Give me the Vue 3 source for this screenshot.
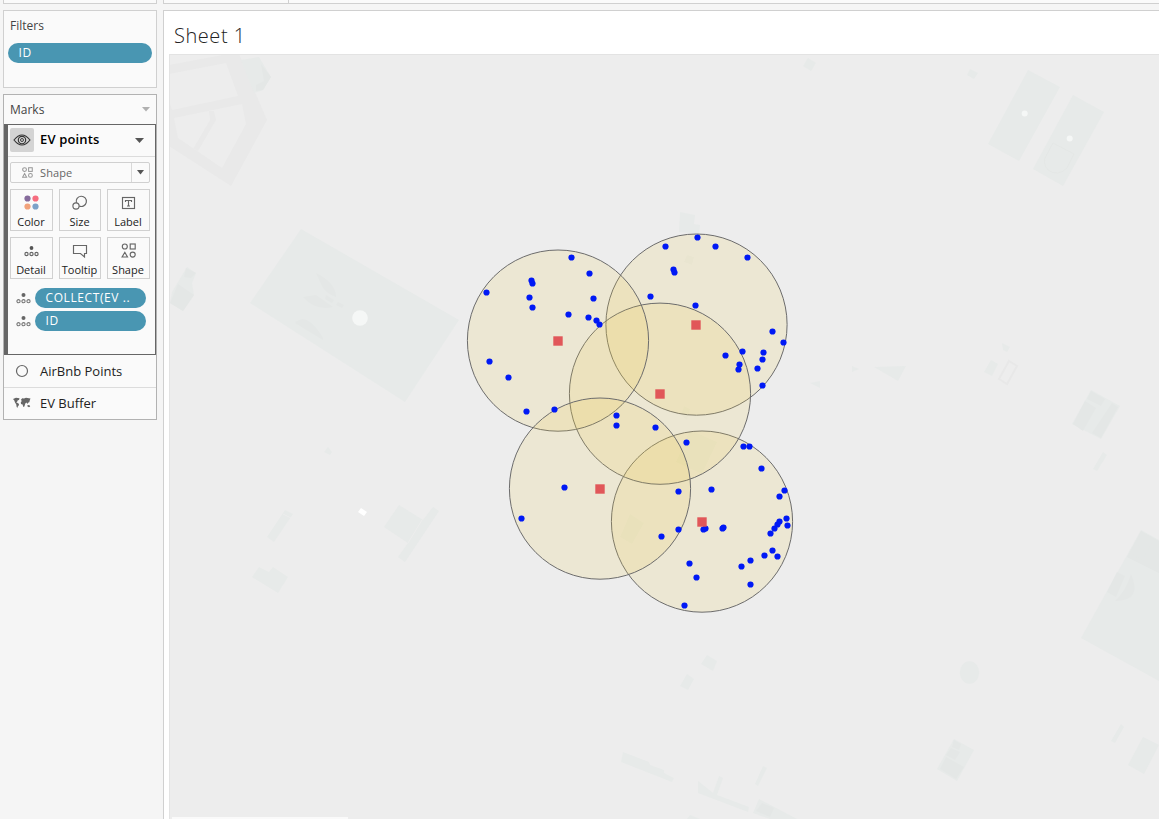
<script setup>
const buffers = [
  [702, 521.6], [696.5, 324.6], [660, 393.7], [558, 340.6], [600, 488.6],
]
const centers = [[558, 341], [696, 325], [660, 394], [600, 489], [702, 522]]
const points = [
  [571.5, 257.5], [589.5, 273.5], [531.5, 280.5], [532.5, 283.5], [486.5, 292.5], [529.5, 297.5], [593.5, 298.5],
  [532.5, 307.5], [568.5, 314.5], [588.5, 317.5], [596.5, 320.5], [599.5, 324.5], [489.5, 361.5], [508.5, 377.5],
  [526.5, 411.5], [554.5, 409.5], [616.5, 415.5], [616.5, 425.5], [655.5, 427.5], [697.5, 237.5], [665.5, 246.5],
  [715.5, 246.5], [747.5, 257.5], [673.5, 269.5], [674.5, 272.5], [650.5, 296.5], [695.5, 305.5], [772.5, 331.5],
  [783.5, 342.5], [742.5, 351.5], [725.5, 355.5], [763.5, 352.5], [762.5, 359.5], [757.5, 368.5], [739.5, 364.5],
  [738.5, 369.5], [762.5, 385.5], [564.5, 487.5], [521.5, 518.5], [686.5, 442.5], [743.5, 446.5], [749.5, 446.5],
  [761.5, 468.5], [784.5, 490.5], [779.5, 496.5], [711.5, 489.5], [678.5, 491.5], [786.5, 518.5], [787.5, 525.5],
  [779.5, 521.5], [777.5, 524.5], [774.5, 528.5], [770.5, 533.5], [705.5, 528.5], [703.5, 529.5], [722.5, 528.5],
  [723.5, 527.5], [678.5, 529.5], [661.5, 536.5], [772.5, 550.5], [764.5, 555.5], [777.5, 556.5], [750.5, 560.5],
  [741.5, 566.5], [689.5, 563.5], [696.5, 577.5], [750.5, 584.5], [684.5, 605.5],
]
const roads = [
  'M169 65L228 54H239L255 92L267 120L231 186L169 146ZM169 74V101L172 110L238 96L226 63ZM174 118L178 138L222 168L246 124L242 104Z',
  'M209 111H214L216 120L198 151L193 149L210 120Z',
]
const buildings = [
  '301,229 459,320 405,402 250,303',
  '241,60 259,57 271,77 263,90 254,93',
  '187,267 196,273 192,283 194,295 183,311 170,303 172,292',
  '808,58 816,63 811,71 803,66',
  '970,69 978,73 974,79 967,75',
  '1028,70 1060,87 1019,161 988,144',
  '1073,95 1104,112 1063,186 1033,169',
  '874,367 906,366 898,381', '852,366 859,369 852,372', '810,383 820,381 820,388',
  '1002,343 1010,347 1007,352 1003,350', '991,360 998,364 992,376 984,372',
  '1091,390 1120,406 1101,439 1072,424', '1103,452 1107,455 1097,471 1093,469',
  '1141,530 1159,540 1159,681 1081,638', '954,739 974,750 957,781 937,769',
  '1121,724 1124,727 1115,743 1111,741', '1143,737 1159,745 1144,774 1128,765',
  '680,212 695,215 694,224 700,225 699,234 679,232',
  '707,655 717,661 713,671 701,664', '687,674 694,679 688,690 680,686',
  '623,752 649,762 650,765 664,770 664,773 674,778 672,782 621,762',
  '698,781 713,793 719,776 723,778 717,795 749,807 748,812 698,793',
  '763,766 767,768 758,786 755,784', '759,799 797,819 770,819 753,813', '690,815 700,819 687,819',
  '285,510 293,514 274,542 267,537', '259,567 269,572 273,567 288,577 278,593 252,577',
  '399,505 423,520 433,507 439,511 405,562 398,557 408,543 384,527', '328,447 332,452 330,455 324,452',
]
const faint = [
  '687,255 694,257 692,265 684,262', '630,514 644,523 632,544 620,537',
  '690,430 717,442 702,474 676,462', '684,406 690,409 687,420 681,415',
]
const details = [
  'M316 273Q336 283 336 297Q325 293 322 286Z', 'M303 297L316 295L333 307Q315 311 303 297Z',
  'M295 323Q307 311 323 338V340Z', 'M326 295L334 300L332 303L325 299Z', 'M338 302L344 305L342 308L336 305Z',
  'M186 268L196 273L191 278L184 277Z', 'M178 284L194 295L183 311L170 303Z', 'M261 64L271 77L263 90L256 91V85L264 81Z',
  'M1091 391L1105 399L1101 406L1087 399Z', 'M1085 401L1096 408L1083 431L1073 424Z', 'M1112 403L1118 407L1101 438L1092 433Z',
  'M1141 531L1159 541V573L1127 557Z', 'M1143 537L1152 543L1142 560L1133 555Z', 'M1117 572L1125 576L1116 597L1107 592Z',
  'M1131 574Q1143 601 1115 601Q1126 591 1131 574Z', 'M954 740L961 744L959 750L952 747Z', 'M951 748L960 752L955 760L946 755Z',
  'M946 757L964 767L956 779L940 769Z', 'M762 803L774 808L770 817L756 811Z',
]
const tools = ['Color', 'Size', 'Label', 'Detail', 'Tooltip', 'Shape']
</script>

<template>
  <div class="app">
    <aside class="side">
      <div class="stub"></div>
      <section class="card filters">
        <h3>Filters</h3>
        <div class="pill">ID</div>
      </section>
      <section class="card marks">
        <header class="marks-head">
          <h3>Marks</h3>
          <svg width="8" height="5"><path d="M0 0H8L4 4.6Z" fill="#b0b0b0" /></svg>
        </header>
        <div class="layer">
          <div class="layer-title">
            <span class="eye">
              <svg width="18" height="12" viewBox="0 0 18 12" fill="none" stroke="#333" stroke-width="1.15">
                <path d="M1 6Q9 -4 17 6Q9 16 1 6Z" /><circle cx="9" cy="6" r="3.7" /><circle cx="9" cy="6" r="1.5" stroke-width=".9" />
              </svg>
            </span>
            <strong>EV points</strong>
            <svg width="9" height="5"><path d="M0 0H9L4.5 5Z" fill="#555" /></svg>
          </div>
          <div class="select">
            <svg class="shape-small" width="11" height="11" viewBox="0 0 15 15" fill="none" stroke="#999" stroke-width="1.4">
              <circle cx="3.5" cy="3.5" r="2.6" /><rect x="9" y="1" width="5" height="5" /><path d="M3.5 9L6.3 14H.8Z" /><circle cx="11.5" cy="11.5" r="2.6" />
            </svg>
            <span>Shape</span>
            <i><svg width="7" height="5"><path d="M0 0H7L3.5 4.5Z" fill="#555" /></svg></i>
          </div>
          <div class="tools">
            <div v-for="t in tools" :key="t" class="tool">
              <svg width="17" height="17" viewBox="0 0 17 17" fill="none" stroke="#666" stroke-width="1.15">
                <g v-if="t === 'Color'" stroke="none">
                  <circle cx="4.5" cy="4.5" r="3.1" fill="#856b9b" /><circle cx="12.5" cy="4.5" r="3.1" fill="#f66d7f" />
                  <circle cx="4.5" cy="12.5" r="3.1" fill="#f1a27b" /><circle cx="12.5" cy="12.5" r="3.1" fill="#7ba2c9" />
                </g>
                <g v-else-if="t === 'Size'">
                  <path d="M5.4 8.8A5.1 5.1 0 1 1 8.2 12" /><circle cx="5" cy="12" r="3.1" />
                </g>
                <g v-else-if="t === 'Label'">
                  <rect x="2.5" y="3.5" width="12" height="11" />
                  <path d="M5.5 8V6.5H11.5V8M8.5 6.5V12M7 12H10" />
                </g>
                <g v-else-if="t === 'Detail'">
                  <circle cx="8.5" cy="6" r="1.9" fill="#555" stroke="none" />
                  <circle cx="3.5" cy="12" r="1.6" /><circle cx="8.5" cy="12" r="1.6" /><circle cx="13.5" cy="12" r="1.6" />
                </g>
                <path v-else-if="t === 'Tooltip'" d="M2.5 3.5H15.5V11.5H13.5V15L9.5 11.5H2.5Z" />
                <g v-else>
                  <circle cx="4.8" cy="4.5" r="2.5" /><rect x="10.2" y="2" width="5" height="5" />
                  <path d="M4.8 10.3L7.5 15H2.1Z" /><circle cx="12.7" cy="12.6" r="2.5" />
                </g>
              </svg>
              <span>{{ t }}</span>
            </div>
          </div>
          <div v-for="p in ['COLLECT(EV ..', 'ID']" :key="p" class="field">
            <svg width="15" height="12" fill="none" stroke="#777" stroke-width="1.1">
              <circle cx="7.5" cy="3" r="2" fill="#666" stroke="none" />
              <circle cx="2.5" cy="9.2" r="1.6" /><circle cx="7.5" cy="9.2" r="1.6" /><circle cx="12.5" cy="9.2" r="1.6" />
            </svg>
            <div class="pill">{{ p }}</div>
          </div>
        </div>
        <div class="row">
          <svg width="18" height="14"><circle cx="9" cy="7" r="5.5" fill="none" stroke="#666" stroke-width="1.2" /></svg>
          <span>AirBnb Points</span>
        </div>
        <div class="row last">
          <svg width="18" height="12" fill="#666">
            <path d="M0 2L3 .8L6.5 1.2L6 3L4.8 3.3L4 5L3 5L5.8 6.8L6 8L4.8 9.5L4.3 11L3.6 9.8L3.3 7.5L2 5.5L1.3 3.5Z" />
            <path d="M7.8 3L9.2 1.3L11 1.5L13 .8L17.5 1.6L16.8 3.2L16.3 5.2L15 5.8L14.5 7L13.4 5.6L12.3 6.4L11.4 9.5L10.3 10L9.6 7.5L8 7L7.8 5L9 4Z" />
            <path d="M14.4 8.2L16.3 8L17.2 9.6L16 10.2L14.5 9.6Z" />
          </svg>
          <span>EV Buffer</span>
        </div>
      </section>
    </aside>
    <main class="main">
      <div class="shelf"><div></div></div>
      <section class="sheet">
        <h1>Sheet 1</h1>
        <div class="map">
          <svg viewBox="169 54 990 765" width="990" height="765">
            <path v-for="(d, i) in roads" :key="'r' + i" :d="d" fill="#e9e9e9" fill-rule="evenodd" />
            <polygon v-for="(b, i) in buildings" :key="'b' + i" :points="b" fill="#e7eae9" />
            <polygon v-for="(b, i) in faint" :key="'f' + i" :points="b" fill="#e9eae9" />
            <ellipse cx="969.5" cy="672.5" rx="9.7" ry="11.2" fill="#e7eae9" />
            <path v-for="(d, i) in details" :key="'d' + i" :d="d" fill="#e4e7e6" />
            <g fill="none" stroke="#e2e5e4">
              <path d="M1009 361L1017 366L1007 384L999 379Z" stroke="#e8e8e8" stroke-width="2" />
              <path d="M1053 143L1074 154L1067 168Q1058 177 1048 170Q1042 163 1046 156Z" stroke-width=".7" />
              <path d="M283 514L291 518M422 520L408 543" stroke="#ededed" />
            </g>
            <g fill="#f5f7f6">
              <circle cx="360" cy="318" r="7.8" /><circle cx="1024.7" cy="113.5" r="3" /><circle cx="1069.7" cy="138.5" r="3" />
              <path d="M361 508L367 512L364 516L358 512Z" fill="#fff" />
            </g>
            <g fill="#efca4e" fill-opacity=".155" stroke="#6c6c6c">
              <circle v-for="(c, i) in buffers" :key="'c' + i" :cx="c[0]" :cy="c[1]" r="90.6" />
            </g>
            <circle v-for="(p, i) in points" :key="'p' + i" :cx="p[0]" :cy="p[1]" r="3.1" fill="#0019f5" />
            <rect v-for="(c, i) in centers" :key="'s' + i" :x="c[0] - 4.7" :y="c[1] - 4.7" width="9.4" height="9.4" fill="#e15759" />
            <path d="M169 54.5H1159M169.5 54V819" stroke="#e3e3e3" />
            <rect x="172" y="817" width="176" height="2" fill="#fafafa" />
          </svg>
        </div>
      </section>
    </main>
  </div>
</template>

<style>
body { margin: 0; overflow: hidden; }
</style>

<style scoped>
* { box-sizing: border-box; }
.app { display: flex; width: 1159px; height: 819px; overflow: hidden; background: #f5f5f5; color: #222; font: 12px/16px "Open Sans", "Noto Sans", sans-serif; }
svg { display: block; flex: none; }
h1, h3 { margin: 0; font-weight: 400; }
.side { width: 163px; padding-left: 3px; display: flex; flex-direction: column; }
.stub { width: 154px; height: 4px; border: 1px solid #d0d0d0; border-top: 0; background: #fafafa; margin-bottom: 6px; }
.card { width: 154px; border: 1px solid #d0d0d0; background: #fafafa; }
h3 { font-size: 12px; line-height: 16px; color: #444; }
.filters { height: 78px; padding: 7px 4px; margin-bottom: 6px; }
.filters h3 { padding-left: 2px; margin-bottom: 9px; }
.pill { height: 20px; border-radius: 10px; background: #4996b2; color: #fff; line-height: 19px; padding-left: 10.5px; white-space: nowrap; letter-spacing: .6px; }
.marks { height: 326px; border-color: #b2b2b2; }
.marks-head { height: 29px; display: flex; align-items: center; justify-content: space-between; padding: 0 6px 0 6px; }
.layer { height: 231px; border: 1px solid #666; border-left-width: 4px; }
.layer-title { height: 32px; border-bottom: 1px solid #dcdcdc; display: flex; align-items: center; padding: 0 11px 0 2px; color: #000; }
.layer-title strong { font-size: 13px; font-weight: 600; letter-spacing: .15px; margin: 0 auto 3px 6px; }
.eye { width: 24px; height: 24px; border-radius: 2px; background: #d4d4d4; display: grid; place-items: center; margin-top: -1px; }
.select { width: 140px; height: 21px; margin: 5px 0 6px 2px; border: 1px solid #d0d0d0; border-radius: 2px; display: flex; align-items: center; color: #666; font-size: 11px; letter-spacing: .1px; }
.shape-small { margin: 0 7px 0 11px; }
.select i { margin-left: auto; width: 18px; height: 19px; border-left: 1px solid #d8d8d8; display: grid; place-items: center; }
.tools { display: grid; grid-template-columns: 43px 42px 43px; gap: 6px; margin-left: 2px; margin-bottom: 9px; }
.tool { height: 42px; border: 1px solid #d0d0d0; display: flex; flex-direction: column; align-items: center; padding: 4px 1px 0 0; font-size: 11px; line-height: 16px; }
.tool span { margin-top: 3px; white-space: nowrap; }
.field { display: flex; align-items: center; padding-left: 8px; gap: 4px; margin-bottom: 3px; }
.field .pill { width: 111px; }
.row { height: 33px; display: flex; align-items: center; gap: 9px; padding-left: 9px; border-bottom: 1px solid #dcdcdc; font-size: 13px; }
.last { height: 30px; border-bottom: 0; }
.main { flex: 1; display: flex; flex-direction: column; }
.shelf { height: 4px; border-left: 1px solid #d0d0d0; border-bottom: 1px solid #d0d0d0; background: #fafafa; margin-bottom: 6px; }
.shelf div { width: 125px; height: 3px; border-right: 1px solid #d0d0d0; }
.sheet { flex: 1; background: #fff; border-left: 1px solid #d0d0d0; border-top: 1px solid #d0d0d0; padding-left: 5px; }
.sheet h1 { height: 43px; padding-left: 5px; font-size: 20px; line-height: 50px; font-weight: 300; letter-spacing: .55px; }
.map { background: #ededed; height: 765px; }
</style>
